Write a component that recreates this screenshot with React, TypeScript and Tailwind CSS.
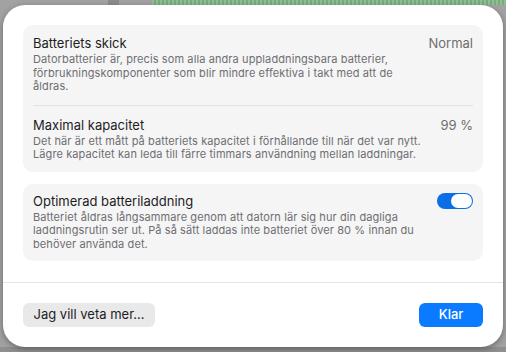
import { FC, ReactNode } from "react";

const font = { fontFamily: "Inter, 'Liberation Sans', sans-serif" };

interface RowProps {
  title: string;
  value?: string;
  children: ReactNode;
}

const Row: FC<RowProps> = ({ title, value, children }) => (
  <div>
    <div className="flex justify-between items-center">
      <h3 className="text-[13px] leading-4 text-[#1d1d1f]">{title}</h3>
      {value ? <span className="text-[13px] leading-4 text-[#6e6e6e]">{value}</span> : null}
    </div>
    <p className="mt-[2px] text-[11px] leading-[13.5px] tracking-[0.1px] text-[#6e6e73]">{children}</p>
  </div>
);

const Toggle: FC = () => (
  <div className="w-[36px] h-[16px] rounded-full bg-[#0a6fe6] flex items-center justify-end px-[1px]">
    <div className="w-[21px] h-[14px] rounded-full bg-white" />
  </div>
);

export default function App() {
  return (
    <div className="relative w-[506px] h-[352px] overflow-hidden bg-[#a2a2a2]" style={font}>
      {/* background window bits */}
      <div className="absolute left-[108px] top-0 w-[11px] h-full bg-[#8c8c8c]" />
      <div
        className="absolute left-[152px] top-0 right-0 h-[5px]"
        style={{ background: "repeating-linear-gradient(90deg,#8fbf95 0 2px,#7aab80 2px 4px)" }}
      />
      <div className="absolute left-0 right-0 bottom-0 h-[5px] bg-[#8f8f8f]" />

      <section className="relative ml-[3px] mt-[5px] w-[500px] h-[342px] rounded-[22px] bg-white shadow-[0_2px_6px_rgba(0,0,0,0.35)] flex flex-col">
        <div className="px-5 pt-5 flex flex-col gap-3">
          <section className="rounded-[10px] bg-[#f5f5f5] px-[10px] pt-[10px] pb-[10px]">
            <Row title="Batteriets skick" value="Normal">
              Datorbatterier är, precis som alla andra uppladdningsbara batterier,
              <br />
              förbrukningskomponenter som blir mindre effektiva i takt med att de
              <br />
              åldras.
            </Row>
            <div className="my-[11px] h-px bg-[#e2e2e2]" />
            <Row title="Maximal kapacitet" value="99 %">
              Det här är ett mått på batteriets kapacitet i förhållande till när det var nytt.
              <br />
              Lägre kapacitet kan leda till färre timmars användning mellan laddningar.
            </Row>
          </section>

          <section className="rounded-[10px] bg-[#f5f5f5] px-[10px] pt-[9px] pb-[10px]">
            <div className="flex justify-between items-center">
              <h3 className="text-[13px] leading-4 text-[#1d1d1f]">Optimerad batteriladdning</h3>
              <Toggle />
            </div>
            <p className="mt-[2px] text-[11px] leading-[13.5px] tracking-[0.1px] text-[#6e6e73]">
              Batteriet åldras långsammare genom att datorn lär sig hur din dagliga
              <br />
              laddningsrutin ser ut. På så sätt laddas inte batteriet över 80 % innan du
              <br />
              behöver använda det.
            </p>
          </section>
        </div>

        <div className="mt-auto border-t border-[#e4e4e4] px-5 pt-5 pb-5 flex justify-between">
          <button className="h-6 w-[132px] rounded-[6px] bg-[#e9e9e9] text-[13px] text-[#1d1d1f]">
            Jag vill veta mer…
          </button>
          <button className="h-6 w-[64px] rounded-[6px] bg-[#0a7aff] text-[13px] font-medium text-white">
            Klar
          </button>
        </div>
      </section>
    </div>
  );
}
